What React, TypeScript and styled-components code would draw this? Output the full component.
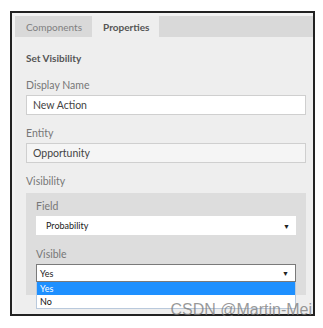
import styled, { createGlobalStyle } from "styled-components";

const Global = createGlobalStyle`
  html, body {
    margin: 0;
    background: #ffffff;
  }
  body {
    font-family: Lato, "Open Sans", sans-serif;
  }
`;

const Frame = styled.div`
  position: relative;
  margin: 11px 0 0 10px;
  width: 298px;
  height: 298px;
  border: 2px solid #222;
  background: #f2f2f2;
  padding: 3px 0 0 3px;
  box-sizing: content-box;
`;

const Panel = styled.div`
  display: flex;
  flex-direction: column;
  height: 100%;
  background: #eeeeee;
`;

const TabBar = styled.div`
  display: flex;
  height: 21px;
  background: #d9d9d9;
`;

const Tab = styled.div<{ $active?: boolean }>`
  display: flex;
  align-items: center;
  padding: 0 10px 0 11px;
  font-size: 10px;
  color: ${(p) => (p.$active ? "#555" : "#808080")};
  font-weight: ${(p) => (p.$active ? 700 : 400)};
  background: ${(p) => (p.$active ? "#eeeeee" : "transparent")};
`;

const Body = styled.div`
  display: flex;
  flex-direction: column;
  padding: 14px 7px 0 11px;
`;

const Heading = styled.div`
  font-size: 10px;
  font-weight: 700;
  color: #555;
  line-height: 14px;
  margin-bottom: 13px;
`;

const Label = styled.div`
  font-size: 10.5px;
  color: #777;
  line-height: 14px;
  margin-bottom: 3px;
`;

const TextBox = styled.div<{ $disabled?: boolean }>`
  height: 18px;
  border: 1px solid #cfcfcf;
  background: ${(p) => (p.$disabled ? "#f5f5f5" : "#ffffff")};
  font-size: 10.5px;
  color: #444;
  display: flex;
  align-items: center;
  padding-left: 6px;
  margin-bottom: 11px;
`;

const Group = styled.div`
  background: #dddddd;
  padding: 6px 10px 13px 10px;
  margin-top: 2px;
`;

const SelectWrap = styled.div`
  position: relative;
  margin-top: 1px;
`;

const Select = styled.div<{ $focused?: boolean }>`
  height: ${(p) => (p.$focused ? "16px" : "19px")};
  border: ${(p) => (p.$focused ? "1px solid #7a7a7a" : "none")};
  background: #ffffff;
  display: flex;
  align-items: center;
  justify-content: space-between;
  padding: 0 6px 0 ${(p) => (p.$focused ? "3px" : "10px")};
  font-size: 9px;
  color: #222;
  margin-bottom: ${(p) => (p.$focused ? "0" : "12px")};
`;

const Arrow = styled.span`
  font-size: 7px;
  color: #222;
`;

const Options = styled.div`
  position: absolute;
  left: 0;
  right: 0;
  top: 100%;
  background: #ffffff;
  border: 1px solid #b9c9dc;
  border-top: none;
  z-index: 2;
`;

const Option = styled.div<{ $selected?: boolean }>`
  height: 13px;
  line-height: 13px;
  padding-left: 3px;
  font-size: 9px;
  color: ${(p) => (p.$selected ? "#ffffff" : "#111")};
  background: ${(p) => (p.$selected ? "#1e90ff" : "#ffffff")};
`;

const Watermark = styled.div`
  position: absolute;
  right: 1px;
  bottom: -4px;
  font-family: "Liberation Sans", Arial, sans-serif;
  font-size: 16px;
  line-height: 17px;
  color: rgba(120, 120, 120, 0.75);
  z-index: 3;
`;

export default function App() {
  return (
    <>
      <Global />
      <Frame>
        <Panel>
          <TabBar>
            <Tab>Components</Tab>
            <Tab $active>Properties</Tab>
          </TabBar>
          <Body>
            <Heading>Set Visibility</Heading>
            <Label>Display Name</Label>
            <TextBox>New Action</TextBox>
            <Label>Entity</Label>
            <TextBox $disabled>Opportunity</TextBox>
            <Label>Visibility</Label>
            <Group>
              <Label>Field</Label>
              <Select>
                Probability
                <Arrow>▼</Arrow>
              </Select>
              <Label>Visible</Label>
              <SelectWrap>
                <Select $focused>
                  Yes
                  <Arrow>▼</Arrow>
                </Select>
                <Options>
                  <Option $selected>Yes</Option>
                  <Option>No</Option>
                </Options>
              </SelectWrap>
            </Group>
          </Body>
        </Panel>
        <Watermark>CSDN @Martin-Mei</Watermark>
      </Frame>
    </>
  );
}
